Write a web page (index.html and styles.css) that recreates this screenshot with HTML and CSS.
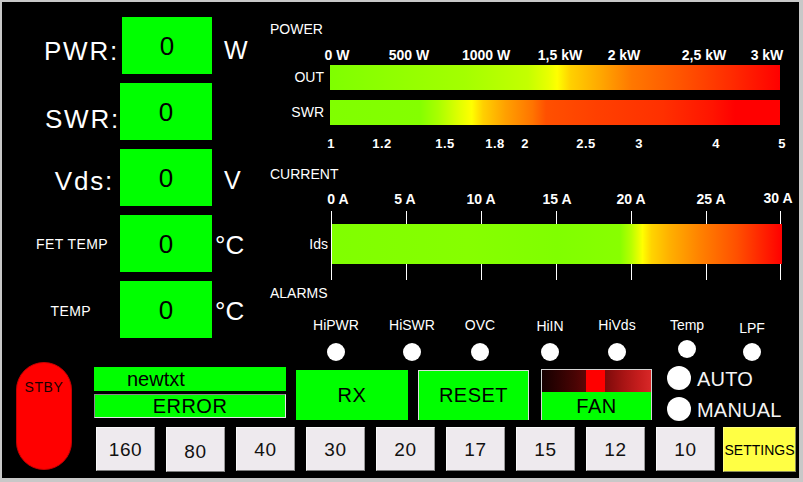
FILE: index.html
```html
<!DOCTYPE html>
<html lang="en">
<head>
<meta charset="utf-8">
<title>PA Controller</title>
<link rel="stylesheet" href="styles.css">
</head>
<body>
<div class="screen">
  <div class="upper">
    <div class="meters">
      <span class="m-label m-pwr">PWR:</span><div class="m-value m-value-pwr">0</div><span class="m-unit m-unit-w">W</span>
      <span class="m-label m-swr">SWR:</span><div class="m-value">0</div><span class="m-unit"></span>
      <span class="m-label m-vds">Vds:</span><div class="m-value">0</div><span class="m-unit m-unit-v">V</span>
      <span class="m-label m-small m-fet">FET TEMP</span><div class="m-value">0</div><span class="m-unit m-deg m-deg-fet">°C</span>
      <span class="m-label m-small m-temp">TEMP</span><div class="m-value">0</div><span class="m-unit m-deg m-deg-temp">°C</span>
    </div>

    <div class="gauges">
      <div class="title">POWER</div>
      <div class="scale scale-power">
        <span style="left:69px">0 W</span>
        <span style="left:141px">500 W</span>
        <span style="left:218px">1000 W</span>
        <span style="left:292px">1,5 kW</span>
        <span style="left:356px">2 kW</span>
        <span style="left:436px">2,5 kW</span>
        <span style="left:499px">3 kW</span>
      </div>
      <div class="bar-row">
        <span class="bar-label">OUT</span>
        <div class="bar bar-out"></div>
      </div>
      <div class="bar-row bar-row-swr">
        <span class="bar-label">SWR</span>
        <div class="bar bar-swr"></div>
      </div>
      <div class="scale scale-swr">
        <span style="left:63px">1</span>
        <span style="left:114px">1.2</span>
        <span style="left:177px">1.5</span>
        <span style="left:227px">1.8</span>
        <span style="left:257px">2</span>
        <span style="left:318px">2.5</span>
        <span style="left:371px">3</span>
        <span style="left:448px">4</span>
        <span style="left:514px">5</span>
      </div>

      <div class="title title-current">CURRENT</div>
      <div class="scale scale-current">
        <span style="left:70px">0 A</span>
        <span style="left:137px">5 A</span>
        <span style="left:213px">10 A</span>
        <span style="left:289px">15 A</span>
        <span style="left:363px">20 A</span>
        <span style="left:443px">25 A</span>
        <span class="scale-end" style="left:510px">30 A</span>
      </div>
      <div class="current-meter">
        <i class="tick" style="left:63px"></i>
        <i class="tick" style="left:138px"></i>
        <i class="tick" style="left:213px"></i>
        <i class="tick" style="left:288px"></i>
        <i class="tick" style="left:363px"></i>
        <i class="tick" style="left:438px"></i>
        <i class="tick" style="left:512px"></i>
        <span class="bar-label">Ids</span>
        <div class="bar bar-ids"></div>
      </div>

      <div class="title title-alarms">ALARMS</div>
      <div class="alarms">
        <div class="alarm"><span>HiPWR</span><i class="led"></i></div>
        <div class="alarm"><span>HiSWR</span><i class="led"></i></div>
        <div class="alarm"><span>OVC</span><i class="led"></i></div>
        <div class="alarm alarm-hiin"><span>HiIN</span><i class="led"></i></div>
        <div class="alarm"><span>HiVds</span><i class="led"></i></div>
        <div class="alarm alarm-temp"><span>Temp</span><i class="led"></i></div>
        <div class="alarm alarm-lpf"><span>LPF</span><i class="led"></i></div>
      </div>
    </div>
  </div>

  <div class="lower">
    <div class="stby">STBY</div>
    <div class="lower-main">
      <div class="controls">
        <div class="status">
          <div class="msg">newtxt</div>
          <div class="error">ERROR</div>
        </div>
        <div class="btn-green btn-rx">RX</div>
        <div class="btn-green btn-reset">RESET</div>
        <div class="fan">
          <div class="fan-heat"></div>
          <div class="fan-label">FAN</div>
        </div>
        <div class="modes">
          <div class="mode"><i class="radio"></i><span>AUTO</span></div>
          <div class="mode"><i class="radio"></i><span>MANUAL</span></div>
        </div>
      </div>
      <div class="bands">
        <button class="band">160</button>
        <button class="band band-80">80</button>
        <button class="band">40</button>
        <button class="band">30</button>
        <button class="band">20</button>
        <button class="band">17</button>
        <button class="band">15</button>
        <button class="band">12</button>
        <button class="band">10</button>
        <button class="band settings">SETTINGS</button>
      </div>
    </div>
  </div>
</div>
</body>
</html>
```

FILE: styles.css
```css
* {
  box-sizing: border-box;
}

html,
body {
  margin: 0;
  padding: 0;
  background: #000;
}

body {
  font-family: "Liberation Sans", Arial, sans-serif;
  color: #fff;
}

/* window frame */
.screen {
  width: 803px;
  height: 482px;
  border-style: solid;
  border-color: #c8c8c8;
  border-width: 2px 4px 4px 2px;
  background: #000;
  display: flex;
  flex-direction: column;
  overflow: hidden;
}

.upper {
  height: 360px;
  flex: none;
  display: flex;
}

/* ---------- numeric readouts ---------- */
.meters {
  width: 266px;
  flex: none;
  padding-top: 15px;
  display: grid;
  grid-template-columns: 118px 92px 1fr;
  grid-auto-rows: 57px;
  row-gap: 9px;
  align-content: start;
}

.m-label {
  justify-self: end;
  align-self: center;
  font-size: 26px;
  line-height: 1;
  letter-spacing: 1.8px;
  white-space: nowrap;
}

.m-pwr { margin-right: 1px; padding-top: 10px; }
.m-swr { margin-right: 0; padding-top: 14px; }
.m-vds { margin-right: 6px; padding-top: 6px; }

.m-small {
  font-size: 14px;
  letter-spacing: 0.4px;
}

.m-fet { margin-right: 12px; padding-top: 1px; }
.m-temp { margin-right: 29px; padding-top: 3px; }

.m-value {
  background: #00ff00;
  color: #000;
  font-size: 26px;
  line-height: 1;
  display: flex;
  align-items: center;
  justify-content: center;
}

.m-value-pwr {
  margin-left: 2px;
}

.m-unit {
  align-self: center;
  font-size: 25px;
  line-height: 1;
  padding-left: 12px;
}

.m-unit-w { padding-top: 10px; }
.m-unit-v { padding-top: 5px; }

.m-deg {
  font-size: 26px;
  padding-left: 3px;
}

.m-deg-fet { padding-top: 2px; }
.m-deg-temp { padding-top: 3px; }

/* ---------- bar gauges ---------- */
.gauges {
  flex: 1;
  padding-top: 19px;
  padding-left: 2px;
  display: flex;
  flex-direction: column;
}

.title {
  font-size: 14px;
  line-height: 16px;
  height: 16px;
}

.title-current { margin-top: 15px; }
.title-alarms { margin-top: 5px; }

.scale {
  position: relative;
  height: 15px;
  margin-left: -2px;
}

.scale span {
  position: absolute;
  top: 0;
  transform: translateX(-50%);
  font-size: 14px;
  font-weight: bold;
  line-height: 15px;
  white-space: nowrap;
}

.scale-power { margin-top: 11px; }

.scale-swr { margin-top: 11px; }

.scale-swr span {
  font-size: 13px;
  letter-spacing: 0.5px;
}

.scale-current { margin-top: 10px; }

.scale-current .scale-end {
  top: -1px;
}

.bar-row {
  margin-top: 2px;
  margin-left: -2px;
  height: 25px;
  display: grid;
  grid-template-columns: 62px 450px;
}

.bar-row-swr { margin-top: 10px; }

.bar-label {
  font-size: 14px;
  line-height: 25px;
  text-align: right;
  padding-right: 6px;
}

.bar {
  height: 100%;
}

.bar-out {
  background: linear-gradient(90deg,
    #7fff00 0%, #a4ff00 30%, #c4ff00 44%, #e8ff00 48.5%, #ffff00 50.5%,
    #ffd000 53.5%, #ffa800 60%, #ff7800 67%, #ff5400 78%, #ff2c00 89%, #ff0000 100%);
}

.bar-swr {
  background: linear-gradient(90deg,
    #80ff00 0%, #84ff00 20%, #a8ff00 24%, #e4ff00 29%, #ffff00 31.5%,
    #ffd000 34%, #ffa000 39%, #ff7400 45%, #ff5000 48%, #ff4000 59%,
    #ff3000 74%, #ff1400 85%, #ff0000 90%, #ff0000 100%);
}

.current-meter {
  position: relative;
  margin-top: 4px;
  margin-left: -2px;
  height: 69px;
  display: grid;
  grid-template-columns: 64px 450px;
  align-items: start;
}

.current-meter .bar-label {
  margin-top: 13px;
  line-height: 40px;
  padding-right: 4px;
}

.tick {
  position: absolute;
  top: 0;
  bottom: 0;
  width: 1px;
  background: #fff;
}

.bar-ids {
  position: relative;
  z-index: 1;
  margin-top: 13px;
  height: 40px;
  background: linear-gradient(90deg,
    #80ff00 0%, #86ff00 30%, #80ff00 50%, #88ff00 64%, #b8ff00 66.5%,
    #ffff00 69%, #ffd400 71%, #ffb000 75%, #ff8000 82%, #ff5000 90%,
    #ff1800 97%, #ff0000 100%);
}

/* ---------- alarm lamps ---------- */
.alarms {
  margin-top: 16px;
  margin-left: 30px;
  display: grid;
  grid-template-columns: 72px 80px 56px 84px 50px 90px 40px;
}

.alarm {
  display: flex;
  flex-direction: column;
  align-items: center;
}

.alarm span {
  font-size: 14px;
  line-height: 16px;
  white-space: nowrap;
}

.led {
  width: 18px;
  height: 18px;
  margin-top: 10px;
  border-radius: 50%;
  background: radial-gradient(circle at 45% 40%, #fff 65%, #d8d8d8 100%);
}

.alarm-hiin span { margin-top: 1px; }
.alarm-hiin .led { margin-top: 9px; }
.alarm-temp .led { margin-top: 7px; }
.alarm-lpf span { margin-top: 3px; }
.alarm-lpf .led { margin-top: 7px; }

/* ---------- bottom controls ---------- */
.lower {
  flex: 1;
  display: flex;
  padding-left: 14px;
}

.stby {
  width: 56px;
  height: 108px;
  flex: none;
  border-radius: 28px;
  background: #ff0000;
  border: 1px solid #c40000;
  color: #1a0000;
  font-size: 14px;
  letter-spacing: 0.6px;
  line-height: 16px;
  text-align: center;
  padding-top: 16px;
}

.lower-main {
  margin-left: 22px;
  display: flex;
  flex-direction: column;
}

.controls {
  height: 58px;
  display: flex;
  align-items: flex-start;
}

.status {
  width: 192px;
  margin-top: 5px;
}

.msg {
  height: 24px;
  background: #00ff00;
  color: #000;
  font-size: 20px;
  line-height: 24px;
  padding-left: 33px;
}

.error {
  height: 24px;
  margin-top: 3px;
  background: #00ff00;
  border: 1px solid;
  border-color: #8a8a8a #e6e6e6 #e6e6e6 #8a8a8a;
  color: #000;
  font-size: 20px;
  line-height: 22px;
  letter-spacing: 0.5px;
  text-align: center;
}

.btn-green {
  height: 50px;
  margin-top: 8px;
  background: #00ff00;
  color: #000;
  font-size: 20px;
  letter-spacing: 0.5px;
  display: flex;
  align-items: center;
  justify-content: center;
}

.btn-rx {
  width: 112px;
  margin-left: 10px;
}

.btn-reset {
  width: 111px;
  margin-left: 10px;
  border: 1px solid #dedede;
  border-bottom: 0;
}

.fan {
  width: 111px;
  height: 51px;
  margin-top: 7px;
  margin-left: 12px;
  border: 1px solid #d4d4d4;
  border-bottom: 0;
  display: flex;
  flex-direction: column;
}

.fan-heat {
  height: 22px;
  flex: none;
  background: linear-gradient(90deg,
    #160000 0%, #2e0202 15%, #480404 30%, #5e0606 40.5%,
    #ff0000 40.5%, #ff0000 57.5%,
    #7c0a0a 57.5%, #a81414 75%, #c81e1e 90%, #d82828 100%);
}

.fan-label {
  flex: 1;
  background: #00ff00;
  color: #000;
  font-size: 20px;
  letter-spacing: 0.5px;
  line-height: 28px;
  text-align: center;
}

.modes {
  margin-left: 15px;
  margin-top: 4px;
  display: flex;
  flex-direction: column;
  gap: 8px;
}

.mode {
  height: 23px;
  display: flex;
  align-items: center;
}

.radio {
  width: 24px;
  height: 24px;
  border-radius: 50%;
  background: radial-gradient(circle at 55% 45%, #fff 62%, #dcdcdc 100%);
}

.mode span {
  margin-left: 6px;
  padding-top: 3px;
  font-size: 20px;
  line-height: 23px;
  color: #f4f4f4;
  letter-spacing: 0.2px;
}

.bands {
  margin-top: 7px;
  padding-left: 2px;
  display: flex;
  align-items: flex-start;
  gap: 11px;
}

.band {
  width: 59px;
  height: 44px;
  margin: 0;
  padding: 0;
  background: #eeeaee;
  border: 1px solid;
  border-color: #fafafa #9a9a9a #7c7c7c #fafafa;
  border-radius: 0;
  color: #111;
  font-family: "Liberation Sans", Arial, sans-serif;
  font-size: 19px;
  letter-spacing: 0.6px;
  line-height: 1;
}

.band-80 {
  height: 45px;
  padding-top: 3px;
}

.settings {
  width: 73px;
  height: 45px;
  margin-left: -3px;
  background: #ffff44;
  border-color: #ffff80 #8a8a5a #8a8a5a #ffff80;
  font-size: 14px;
  letter-spacing: 0;
  color: #000;
}
```
